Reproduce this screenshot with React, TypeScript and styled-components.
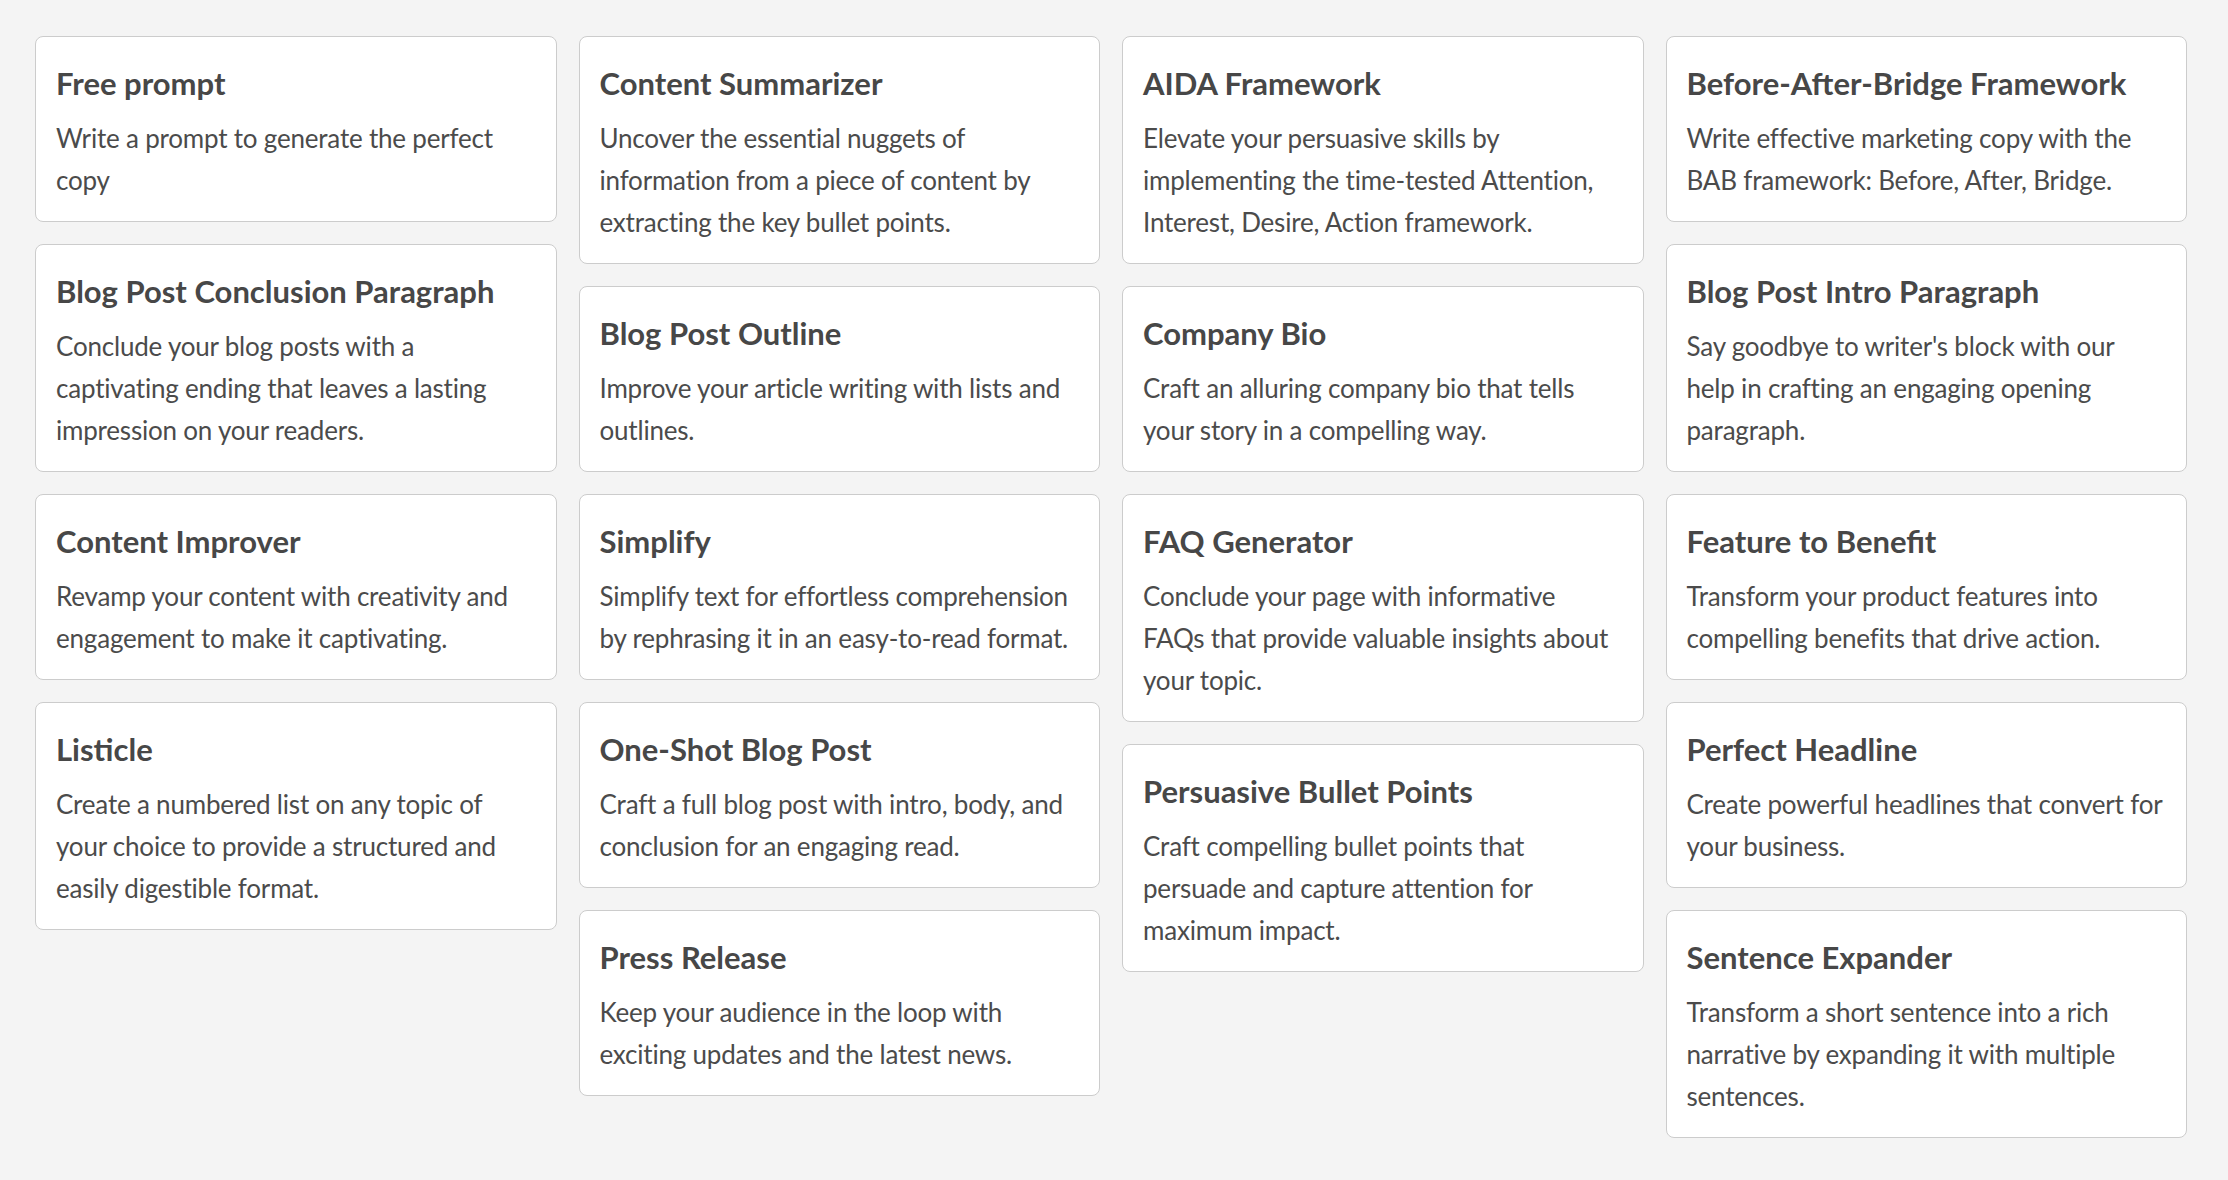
import React from "react";
import styled, { createGlobalStyle } from "styled-components";

type Prompt = {
  title: string;
  description: string;
};

const columns: Prompt[][] = [
  [
    { title: "Free prompt", description: "Write a prompt to generate the perfect copy" },
    {
      title: "Blog Post Conclusion Paragraph",
      description: "Conclude your blog posts with a captivating ending that leaves a lasting impression on your readers.",
    },
    {
      title: "Content Improver",
      description: "Revamp your content with creativity and engagement to make it captivating.",
    },
    {
      title: "Listicle",
      description: "Create a numbered list on any topic of your choice to provide a structured and easily digestible format.",
    },
  ],
  [
    {
      title: "Content Summarizer",
      description: "Uncover the essential nuggets of information from a piece of content by extracting the key bullet points.",
    },
    { title: "Blog Post Outline", description: "Improve your article writing with lists and outlines." },
    {
      title: "Simplify",
      description: "Simplify text for effortless comprehension by rephrasing it in an easy-to-read format.",
    },
    {
      title: "One-Shot Blog Post",
      description: "Craft a full blog post with intro, body, and conclusion for an engaging read.",
    },
    {
      title: "Press Release",
      description: "Keep your audience in the loop with exciting updates and the latest news.",
    },
  ],
  [
    {
      title: "AIDA Framework",
      description:
        "Elevate your persuasive skills by implementing the time-tested Attention, Interest, Desire, Action framework.",
    },
    {
      title: "Company Bio",
      description: "Craft an alluring company bio that tells your story in a compelling way.",
    },
    {
      title: "FAQ Generator",
      description: "Conclude your page with informative FAQs that provide valuable insights about your topic.",
    },
    {
      title: "Persuasive Bullet Points",
      description: "Craft compelling bullet points that persuade and capture attention for maximum impact.",
    },
  ],
  [
    {
      title: "Before-After-Bridge Framework",
      description: "Write effective marketing copy with the BAB framework: Before, After, Bridge.",
    },
    {
      title: "Blog Post Intro Paragraph",
      description: "Say goodbye to writer's block with our help in crafting an engaging opening paragraph.",
    },
    {
      title: "Feature to Benefit",
      description: "Transform your product features into compelling benefits that drive action.",
    },
    { title: "Perfect Headline", description: "Create powerful headlines that convert for your business." },
    {
      title: "Sentence Expander",
      description: "Transform a short sentence into a rich narrative by expanding it with multiple sentences.",
    },
  ],
];

export default function App() {
  return (
    <>
      <GlobalStyle />
      <Gallery>
        {columns.map((column, i) => (
          <Column key={i}>
            {column.map((prompt) => (
              <Card key={prompt.title}>
                <Title>{prompt.title}</Title>
                <Description>{prompt.description}</Description>
              </Card>
            ))}
          </Column>
        ))}
      </Gallery>
    </>
  );
}

const GlobalStyle = createGlobalStyle`
  html, body {
    margin: 0;
    background: #f4f4f4;
  }
  body {
    font-family: Lato, "Open Sans", sans-serif;
    color: #4b4b4b;
  }
`;

const Gallery = styled.main`
  display: grid;
  grid-template-columns: repeat(4, 1fr);
  column-gap: 22px;
  align-items: start;
  padding: 36px 41px 36px 35px;
  min-height: 1180px;
  box-sizing: border-box;
`;

const Column = styled.div`
  display: flex;
  flex-direction: column;
  gap: 22px;
`;

const Card = styled.article`
  background: #fff;
  border: 1.5px solid #cccccc;
  border-radius: 8px;
  padding: 26px 20px 20px;
  cursor: pointer;
`;

const Title = styled.h3`
  margin: 0 0 14px;
  font-size: 31px;
  line-height: 40px;
  font-weight: 700;
  color: #474747;
`;

const Description = styled.p`
  margin: 0;
  font-size: 26px;
  line-height: 42px;
  letter-spacing: -0.2px;
  color: #4b4b4b;
`;
